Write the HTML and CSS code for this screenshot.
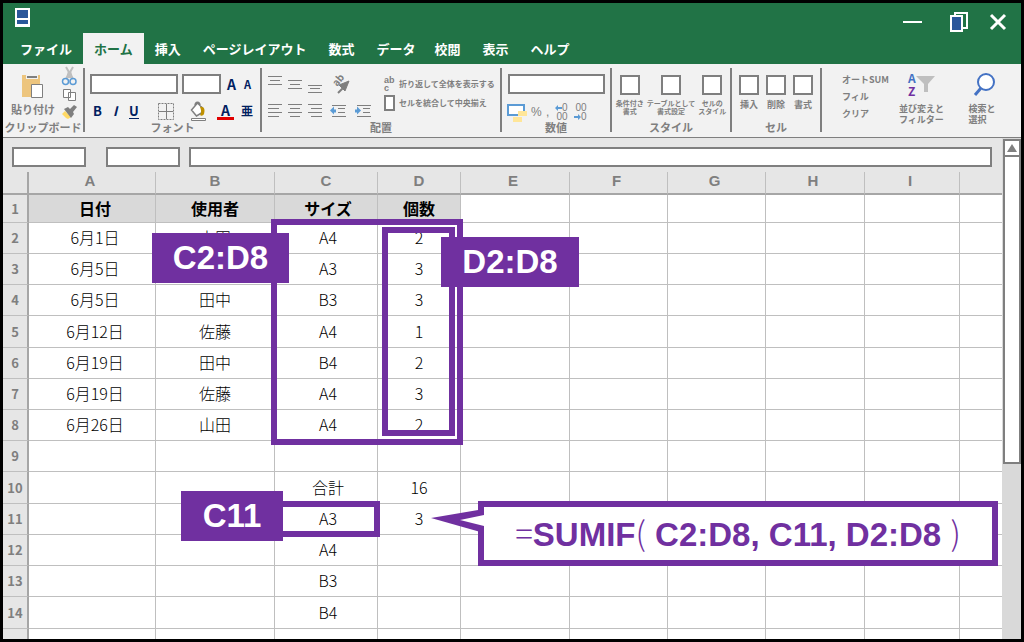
FILE: index.html
```html
<!DOCTYPE html>
<html lang="ja">
<head>
<meta charset="utf-8">
<title>SUMIF</title>
<link rel="stylesheet" href="styles.css">
</head>
<body>
<header class="titlebar">
  <svg class="app-icon" width="15" height="19" viewBox="0 0 15 19"><path fill="#fff" d="M0 0h15v19H0z"/><path fill="#2b579a" d="M2 2h11v8H2zM2 12h11v4H2z"/></svg>
  <div class="window-buttons">
    <button aria-label="最小化"><svg width="19" height="22" viewBox="0 0 19 22"><path d="M0 11h19" stroke="#fff" stroke-width="2"/></svg></button>
    <button class="restore" aria-label="元に戻す"><svg width="18" height="22" viewBox="0 0 18 22"><path d="M5 2h12v15H5z" fill="none" stroke="#fff" stroke-width="2"/><path d="M1 5h11v15H1z" fill="#2b579a" stroke="#fff" stroke-width="2"/></svg></button>
    <button aria-label="閉じる"><svg width="16" height="22" viewBox="0 0 16 22"><path d="M1 4l14 14M15 4L1 18" stroke="#fff" stroke-width="3"/></svg></button>
  </div>
</header>
<nav class="tabs">
  <button>ファイル</button><button class="active">ホーム</button><button>挿入</button><button>ページレイアウト</button><button>数式</button><button>データ</button><button class="near">校閲</button><button>表示</button><button>ヘルプ</button>
</nav>
<section class="ribbon">
  <div class="group clipboard">
    <div class="content">
      <button class="stack paste">
        <svg width="22" height="26" viewBox="0 0 22 26"><path fill="#edc57e" d="M0 2h18v22H0z"/><path fill="#f2f2f2" d="M4 0h12v6H4z"/><path fill="#7f7f7f" d="M5 3h10v2H5z"/><path fill="#fff" stroke="#7f7f7f" d="M9.500 11.500h11v13h-11z"/></svg>
        <span>貼り付け</span>
      </button>
      <div class="side-icons">
        <button aria-label="切り取り"><svg width="15" height="20" viewBox="0 0 15 20"><path d="M4 1l7 12M11 1L4 13" stroke="#bfbfbf" stroke-width="2"/><path d="M6 5h3l2 7H4z" fill="#bfbfbf"/><circle cx="3.500" cy="15.500" r="3" fill="none" stroke="#5b9bd5" stroke-width="1.500"/><circle cx="11" cy="15.500" r="3" fill="none" stroke="#5b9bd5" stroke-width="1.500"/></svg></button>
        <button aria-label="コピー"><svg width="15" height="14" viewBox="0 0 15 14"><path d="M1.500 1.500h7v8h-7zM6.500 4.500h7v8h-7z" fill="#fff" stroke="#7f7f7f"/></svg></button>
        <button aria-label="書式のコピー"><svg width="15" height="15" viewBox="0 0 15 15"><path d="M0 10l3-3 6 6-3 2-2-1z" fill="#ffd966"/><path d="M2 5l4-2 2 2 4-4 3 2-4 5 1 2-3 4z" fill="#7f7f7f"/></svg></button>
      </div>
    </div>
    <div class="label">クリップボード</div>
  </div>
  <div class="group font">
    <div class="content col">
      <div class="row top-row"><input class="box w-font" aria-label="フォント名"><input class="box w-size" aria-label="フォント サイズ"><button class="letter big">A</button><button class="letter">A</button></div>
      <div class="styles">
        <button class="letter mid">B</button><button class="letter mid italic">I</button><button class="letter mid under">U</button>
        <button aria-label="罫線"><svg width="16" height="17" viewBox="0 0 16 17"><path d="M.5.5h15v16H.5z" fill="none" stroke="#7f7f7f" stroke-dasharray="2 1"/><path d="M8.500 1v15M1 8.500h14" stroke="#7f7f7f"/></svg></button>
        <button aria-label="塗りつぶし"><svg width="17" height="20" viewBox="0 0 17 20"><path d="M1.500 9l6-7 5 5-1 5-5 3zM5 5c0-5 5-5 5 0" fill="#fff" stroke="#7f7f7f" stroke-width="1.500"/><path d="M10 6c5-1 5 4 4 7-1 2-3 2-4 1 2-3 1-5 0-8z" fill="#bf9000"/><path d="M1.500 17.500h14v2h-14z" fill="#fff" stroke="#7f7f7f"/></svg></button>
        <button class="letter big red">A</button><button class="letter ruby">亜</button>
      </div>
    </div>
    <div class="label">フォント</div>
  </div>
  <div class="group align">
    <div class="content">
      <div class="col">
        <div class="row lines">
          <button aria-label="上揃え"><svg width="14" height="20" viewBox="0 0 14 20"><path d="M0 2.500h14M2 6.500h10M0 10.500h14"/></svg></button>
          <button aria-label="上下中央揃え"><svg width="14" height="20" viewBox="0 0 14 20"><path d="M0 6.500h14M2 10.500h10M0 14.500h14"/></svg></button>
          <button aria-label="下揃え"><svg width="14" height="20" viewBox="0 0 14 20"><path d="M0 11.500h14M2 14.500h10M0 18.500h14"/></svg></button>
          <button class="orient" aria-label="方向"><svg width="20" height="20" viewBox="0 0 20 20"><text x="0" y="0" transform="translate(6 13) rotate(-50)" class="svg-ab">ab</text><path d="M7 19l8-8" stroke-width="2"/><path class="solid" d="M8 11l10-4-4 10z"/></svg></button>
        </div>
        <div class="row lines second">
          <button aria-label="左揃え"><svg width="14" height="15" viewBox="0 0 14 15"><path d="M0 1.500h14M0 5.500h11M0 9.500h14M0 13.500h11"/></svg></button>
          <button aria-label="中央揃え"><svg width="14" height="15" viewBox="0 0 14 15"><path d="M0 1.500h14M2 5.500h10M0 9.500h14M2 13.500h10"/></svg></button>
          <button aria-label="右揃え"><svg width="14" height="15" viewBox="0 0 14 15"><path d="M0 1.500h14M3 5.500h11M0 9.500h14M3 13.500h11"/></svg></button>
          <button aria-label="インデントを減らす"><svg width="17" height="15" viewBox="0 0 17 15"><path d="M2 2.500h14M8 5.500h7M8 9.500h7M2 13.500h14"/><path class="blue" d="M0 7.500l4-4v3h2v3H4v2z"/></svg></button>
          <button aria-label="インデントを増やす"><svg width="17" height="15" viewBox="0 0 17 15"><path d="M2 2.500h14M8 5.500h7M8 9.500h7M2 13.500h14"/><path class="blue" d="M6 7.500l-4-4v3H0v3h2v2z"/></svg></button>
        </div>
      </div>
      <div class="col wraps">
        <button class="tiny"><span class="abc">ab<br>c</span>折り返して全体を表示する</button>
        <button class="tiny"><span class="merge"></span>セルを統合して中央揃え</button>
      </div>
    </div>
    <div class="label">配置</div>
  </div>
  <div class="group number">
    <div class="content col">
      <input class="box" aria-label="表示形式">
      <div class="row formats">
        <button aria-label="通貨"><svg width="21" height="20" viewBox="0 0 21 20"><path d="M1 3h16v10H1z" fill="#fff" stroke="#5b9bd5" stroke-width="2"/><path d="M11 9h9v5h-9zM6 15h9v5H6z" fill="#ffe699"/></svg></button>
        <button>%</button><button class="comma">,</button>
        <button class="dec"><span><svg width="7" height="6" viewBox="0 0 7 6"><path d="M0 3l3-3v2h4v2H3v2z" fill="#5b9bd5"/></svg>0</span><span>00</span></button>
        <button class="dec"><span>00</span><span><svg width="7" height="6" viewBox="0 0 7 6"><path d="M7 3L4 0v2H0v2h4v2z" fill="#5b9bd5"/></svg>0</span></button>
      </div>
    </div>
    <div class="label">数値</div>
  </div>
  <div class="group style">
    <div class="content tiles">
      <button class="tile"><i></i>条件付き<br>書式</button>
      <button class="tile"><i></i>テーブルとして<br>書式設定</button>
      <button class="tile"><i></i>セルの<br>スタイル</button>
    </div>
    <div class="label">スタイル</div>
  </div>
  <div class="group cells">
    <div class="content tiles">
      <button class="tile"><i></i>挿入</button>
      <button class="tile"><i></i>削除</button>
      <button class="tile"><i></i>書式</button>
    </div>
    <div class="label">セル</div>
  </div>
  <div class="group edit">
    <div class="col edit-list"><button>オートSUM</button><button>フィル</button><button>クリア</button></div>
    <button class="stack"><svg width="30" height="28" viewBox="0 0 30 28"><text x="1" y="10" class="svg-a">A</text><text x="1" y="23" class="svg-z">Z</text><path d="M9 3h19l-7 8v8h-4v-8z" fill="#bfbfbf"/></svg><span>並び変えと<br>フィルター</span></button>
    <button class="stack"><svg width="28" height="28" viewBox="0 0 28 28"><circle cx="18" cy="9" r="8" fill="#fff" stroke="#4472c4" stroke-width="2"/><path d="M13 15l-6 7" stroke="#4472c4" stroke-width="3"/></svg><span>検索と<br>選択</span></button>
  </div>
</section>
<main class="workspace">
  <div class="sheet">
    <div class="formula-bar"><input class="box name" aria-label="名前"><input class="box name func" aria-label="関数"><input class="box formula" aria-label="数式"></div>
    <table>
      <colgroup><col class="c-num"><col class="c-a"><col class="c-b"><col class="c-c"><col class="c-d"><col class="c-e"><col class="c-f"><col class="c-f"><col class="c-h"><col class="c-i"><col></colgroup>
      <thead><tr><th></th><th>A</th><th>B</th><th>C</th><th>D</th><th>E</th><th>F</th><th>G</th><th>H</th><th>I</th><th></th></tr></thead>
      <tbody>
        <tr class="heading"><th>1</th><td>日付</td><td>使用者</td><td>サイズ</td><td>個数</td><td></td><td></td><td></td><td></td><td></td><td></td></tr>
        <tr><th>2</th><td>6月1日</td><td>山田</td><td>A4</td><td>2</td><td></td><td></td><td></td><td></td><td></td><td></td></tr>
        <tr><th>3</th><td>6月5日</td><td></td><td>A3</td><td>3</td><td></td><td></td><td></td><td></td><td></td><td></td></tr>
        <tr><th>4</th><td>6月5日</td><td>田中</td><td>B3</td><td>3</td><td></td><td></td><td></td><td></td><td></td><td></td></tr>
        <tr class="tall"><th>5</th><td>6月12日</td><td>佐藤</td><td>A4</td><td>1</td><td></td><td></td><td></td><td></td><td></td><td></td></tr>
        <tr><th>6</th><td>6月19日</td><td>田中</td><td>B4</td><td>2</td><td></td><td></td><td></td><td></td><td></td><td></td></tr>
        <tr><th>7</th><td>6月19日</td><td>佐藤</td><td>A4</td><td>3</td><td></td><td></td><td></td><td></td><td></td><td></td></tr>
        <tr><th>8</th><td>6月26日</td><td>山田</td><td>A4</td><td>2</td><td></td><td></td><td></td><td></td><td></td><td></td></tr>
        <tr><th>9</th><td></td><td></td><td></td><td></td><td></td><td></td><td></td><td></td><td></td><td></td></tr>
        <tr class="tall"><th>10</th><td></td><td></td><td>合計</td><td>16</td><td></td><td></td><td></td><td></td><td></td><td></td></tr>
        <tr><th>11</th><td></td><td></td><td>A3</td><td>3</td><td></td><td></td><td></td><td></td><td></td><td></td></tr>
        <tr><th>12</th><td></td><td></td><td>A4</td><td></td><td></td><td></td><td></td><td></td><td></td><td></td></tr>
        <tr><th>13</th><td></td><td></td><td>B3</td><td></td><td></td><td></td><td></td><td></td><td></td><td></td></tr>
        <tr class="tall"><th>14</th><td></td><td></td><td>B4</td><td></td><td></td><td></td><td></td><td></td><td></td><td></td></tr>
        <tr class="rest"><th></th><td></td><td></td><td></td><td></td><td></td><td></td><td></td><td></td><td></td><td></td></tr>
      </tbody>
    </table>
  </div>
  <div class="scrollbar">
    <button class="up" aria-label="上へスクロール"><svg width="12" height="10" viewBox="0 0 12 10"><path d="M6 1l5 8H1z" fill="#7f7f7f"/></svg></button>
    <div class="thumb"></div>
  </div>
  <div class="frame range"></div>
  <div class="frame sum"></div>
  <div class="frame key"></div>
  <div class="tag tag-range">C2:D8</div>
  <div class="tag tag-sum">D2:D8</div>
  <div class="tag tag-key">C11</div>
  <div class="frame callout"><span class="thin">=</span>SUMIF<span class="thin">(</span> C2:D8, C11, D2:D8 <span class="thin">)</span></div>
  <svg class="pointer" width="53" height="24" viewBox="0 0 53 24"><path fill="#7030a0" d="M0 9L53 0v24z"/><path fill="#fff" d="M29 11l24-5v11z"/></svg>
</main>
</body>
</html>
```
FILE: styles.css
```css
* { box-sizing: border-box; }
body {
  margin: 0;
  min-height: 100vh;
  border: 3px solid #000;
  display: flex;
  flex-direction: column;
  background: #fff;
  color: #000;
  font-family: "Noto Sans CJK JP", sans-serif;
}
button {
  border: 0;
  padding: 0;
  background: none;
  color: inherit;
  font: inherit;
  white-space: nowrap;
}
svg { display: block; flex: none; overflow: visible; }
.row { display: flex; align-items: center; }
.col { display: flex; flex-direction: column; }
.box {
  border: 2px solid #7f7f7f;
  border-radius: 0;
  background: #fff;
  height: 20px;
  min-width: 0;
  padding: 0 4px;
  font: inherit;
}

.titlebar {
  height: 30px;
  padding: 5px 15px 0 12px;
  background: #217346;
  display: flex;
  justify-content: space-between;
  align-items: flex-start;
}
.window-buttons { display: flex; padding-top: 3px; }
.restore { margin: 0 22px 0 28px; }
.tabs {
  height: 31px;
  padding-left: 6px;
  background: #217346;
  color: #fff;
  display: flex;
  font-size: 13px;
  font-weight: 700;
}
.tabs button { padding: 0 11px; }
.tabs .active { background: #f2f2f2; color: #217346; }
.tabs .near { padding-left: 8px; }

.ribbon {
  height: 74px;
  padding: 4px 0 5px;
  border-bottom: 1px solid #7f7f7f;
  background: #f2f2f2;
  color: #7f7f7f;
  display: flex;
  font-size: 11px;
  font-weight: 700;
  line-height: 13px;
}
.group {
  border-right: 2px solid #7f7f7f;
  display: flex;
  flex-direction: column;
  flex: none;
}
.content { flex: 1; display: flex; min-height: 0; padding-top: 6px; }
.content.col { padding-left: 5px; }
.label { text-align: center; line-height: 9px; white-space: nowrap; }
.stack { display: flex; flex-direction: column; align-items: center; }

.clipboard { width: 82px; }
.clipboard .content { padding: 0 6px 0 8px; justify-content: space-between; }
.paste { gap: 4px; padding-top: 5px; }
.side-icons { display: flex; flex-direction: column; gap: 2px; margin-top: -2px; }

.font { width: 177px; }
.top-row { gap: 4px; }
.w-font { width: 88px; }
.w-size { width: 39px; }
.letter { color: #002060; font-size: 11px; line-height: 14px; }
.letter.big { font-size: 14px; padding: 0 4px 0 2px; }
.letter.mid { font-size: 13px; }
.styles {
  display: grid;
  grid-template-columns: 20px 16px 29px 32px 27px auto;
  grid-auto-flow: column;
  align-items: center;
  justify-items: start;
  padding: 7px 0 0 3px;
}
.italic { font-style: italic; }
.under { border-bottom: 1px solid #002060; }
.letter.red { border-bottom: 3px solid #e00000; padding: 0 4px; }
.letter.ruby { font-size: 12px; }

.align { width: 240px; }
.align .content { padding-left: 6px; gap: 12px; }
.lines { gap: 6px; }
.lines path { stroke: #7f7f7f; fill: none; }
.lines .solid { fill: #7f7f7f; }
.lines .blue { fill: #5b9bd5; stroke: none; }
.orient { padding-left: 3px; }
.svg-ab { font-size: 10px; fill: #7f7f7f; }
.second { padding-top: 9px; }
.second button:nth-child(n+4) { padding-left: 2px; }
.wraps { gap: 3px; padding-top: 2px; }
.tiny { display: flex; align-items: center; gap: 4px; font-size: 8px; line-height: 16px; }
.abc { width: 11px; font-family: "Liberation Sans", sans-serif; font-size: 9px; line-height: 8px; text-align: left; }
.merge { width: 11px; height: 16px; border: 2px solid #7f7f7f; background: #fff; }

.number { width: 110px; }
.number .content { padding-right: 5px; }
.box[aria-label="表示形式"] { margin-left: 1px; }
.formats { padding-top: 8px; gap: 3px; font-family: "Liberation Sans", sans-serif; font-size: 12px; font-weight: 400; }
.comma { width: 6px; }
.dec { display: flex; flex-direction: column; font-size: 10px; line-height: 9px; }
.dec span { display: flex; justify-content: flex-end; align-items: center; min-width: 14px; }
.dec + .dec { margin-left: 2px; }

.tiles { padding-top: 7px; }
.tile { display: flex; flex-direction: column; align-items: center; font-size: 7px; line-height: 8px; }
.tile i { width: 20px; height: 20px; margin-bottom: 4px; border: 2px solid #7f7f7f; background: #fff; }
.style { width: 120px; }
.style .tiles { justify-content: center; gap: 3px; }
.cells { width: 90px; }
.cells .tiles { justify-content: center; gap: 7px; }
.cells .tile { font-size: 9px; line-height: 12px; }
.edit { flex: 1; border: 0; flex-direction: row; padding-left: 20px; font-size: 9px; line-height: 11px; align-items: flex-start; }
.edit-list { gap: 6px; padding-top: 6px; width: 57px; align-items: flex-start; }
.edit .stack { padding-top: 5px; margin-right: 24px; gap: 2px; text-align: left; }
.svg-a { fill: #4472c4; font-size: 12px; }
.svg-z { fill: #7030a0; font-size: 12px; }

.workspace { position: relative; flex: 1; display: flex; }
.sheet { flex: 1; min-width: 0; display: flex; flex-direction: column; }
.formula-bar { display: flex; padding: 9px 10px 5px 9px; background: #e6e6e6; }
.name { width: 74px; }
.func { margin: 0 9px 0 20px; }
.formula { flex: 1; }
table { width: 100%; table-layout: fixed; border-collapse: separate; border-spacing: 0; }
.c-num { width: 26px; }
.c-a { width: 127px; }
.c-b { width: 119px; }
.c-c { width: 103px; }
.c-d { width: 83px; }
.c-e { width: 109px; }
.c-f { width: 98px; }
.c-h { width: 99px; }
.c-i { width: 95px; }
th, td {
  height: 31px;
  padding: 0;
  border-right: 1px solid #bfbfbf;
  border-bottom: 1px solid #bfbfbf;
  text-align: center;
  font-size: 16px;
  line-height: 20px;
  font-weight: 300;
}
td { padding-bottom: 2px; }
th { background: #e6e6e6; color: #7f7f7f; font-weight: 700; }
thead th {
  height: 23px;
  padding-bottom: 3px;
  border-bottom: 2px solid #a6a6a6;
  font-family: "Liberation Sans", sans-serif;
  font-size: 15px;
  line-height: 18px;
}
thead th:nth-child(2), thead th:nth-child(n+6) { padding-right: 4px; }
tbody th { font-size: 13px; }
th:first-child { border-right: 2px solid #a6a6a6; }
th:last-child, td:last-child { border-right: 0; }
td:nth-child(2) { padding-left: 6px; }
td:nth-child(4) { padding-left: 4px; }
.heading > * { height: 28px; }
.heading td { font-weight: 700; }
.heading td:nth-child(-n+5) { background: #d9d9d9; }
.tall > * { height: 32px; }
.rest > * { height: 10px; border-bottom: 0; }

.scrollbar { width: 19px; padding: 1px 0 0 1px; background: #d9d9d9; display: flex; flex-direction: column; }
.up { height: 18px; border: 2px solid #7f7f7f; background: #fff; display: grid; place-items: center; }
.thumb { height: 309px; margin-top: -2px; border: 2px solid #7f7f7f; background: #fff; }

.frame { position: absolute; border: 6px solid #7030a0; }
.range { left: 268px; top: 81px; width: 192px; height: 226px; }
.sum { left: 379px; top: 89px; width: 73px; height: 209px; }
.key { left: 274px; top: 363px; width: 103px; height: 36px; }
.tag, .callout {
  position: absolute;
  font-family: "Liberation Sans", "Noto Sans CJK JP", sans-serif;
  font-weight: 700;
  line-height: 50px;
  text-align: center;
  white-space: nowrap;
}
.tag {
  height: 50px;
  background: #7030a0;
  color: #fff;
  font-size: 33px;
}
.tag-range { left: 149px; top: 95px; width: 137px; }
.tag-sum { left: 438px; top: 99px; width: 138px; }
.tag-key { left: 178px; top: 353px; width: 102px; }
.callout {
  left: 475px;
  top: 363px;
  width: 520px;
  height: 65px;
  background: #fff;
  color: #7030a0;
  font-size: 33px;
}
.thin { font-family: "Noto Sans CJK JP", sans-serif; font-weight: 300; }
.pointer { position: absolute; left: 428px; top: 371px; }
```
